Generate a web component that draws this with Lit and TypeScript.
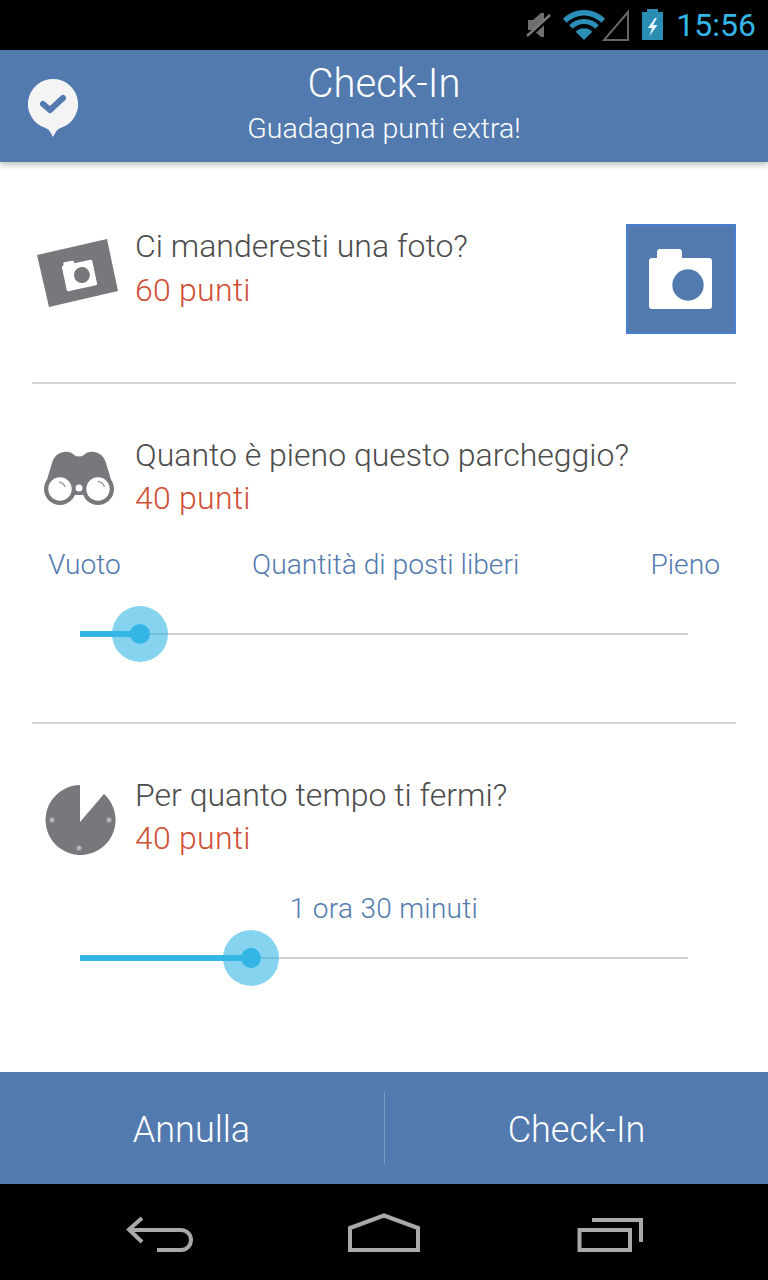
import { customElement, property } from "lit/decorators.js";
import { html, css, svg, LitElement } from "lit";

@customElement("level-slider")
export class LevelSlider extends LitElement {
  @property({ type: Number })
  value: number = 0;

  static styles = css`
    :host {
      display: block;
      height: 56px;
      margin: 0 48px;
    }
    .track {
      position: relative;
      height: 56px;
      background: linear-gradient(#d0d0d0, #d0d0d0) 0 27px / 100% 2px no-repeat;
    }
    .fill {
      position: absolute;
      left: 0;
      top: 25px;
      height: 6px;
      background: #33b5e5;
    }
    .halo {
      position: absolute;
      top: 0;
      width: 56px;
      height: 56px;
      margin-left: -28px;
      border-radius: 50%;
      background: rgba(51, 181, 229, 0.6);
    }
    .knob {
      position: absolute;
      top: 18px;
      left: 18px;
      width: 20px;
      height: 20px;
      border-radius: 50%;
      background: #33b5e5;
    }
  `;

  render() {
    return html`
      <div class="track">
        <div class="fill" style="width: ${this.value}px"></div>
        <div class="halo" style="left: ${this.value}px"><div class="knob"></div></div>
      </div>
    `;
  }
}

const cameraSmall = svg`
  <path fill="#76787c" d="M5 31 L75 15 L86 67 L17 83 Z" />
  <g transform="rotate(-12 47.500 51.500)">
    <path
      fill="#fff"
      d="M34 38.500 V37 a1.500 1.500 0 0 1 1.500 -1.500 h8 a1.500 1.500 0 0 1 1.500 1.500 v1.500 h16.500 a1.500 1.500 0 0 1 1.500 1.500 v23 a1.500 1.500 0 0 1 -1.500 1.500 h-28 a1.500 1.500 0 0 1 -1.500 -1.500 v-23 a1.500 1.500 0 0 1 1.500 -1.500 z"
    />
    <circle cx="50" cy="51.500" r="8" fill="#76787c" />
  </g>
`;

const binoculars = svg`
  <path
    fill="#76787c"
    d="M14 50 L20 30 C23 18 37 16 42 22 Q47 25 52 22 C57 16 71 18 74 30 L80 50 L66 56 L50 62 H44 L28 56 Z"
  />
  <circle cx="28" cy="56" r="16" fill="#76787c" />
  <circle cx="66" cy="56" r="16" fill="#76787c" />
  <circle cx="28" cy="56" r="11.700" fill="#fff" />
  <circle cx="66" cy="56" r="11.700" fill="#fff" />
  <path d="M27 49 a8 8 0 0 1 6 5" fill="none" stroke="#9a9b9e" stroke-width="1.300" />
  <path d="M66 48.500 a8 8 0 0 1 6.500 5.500" fill="none" stroke="#9a9b9e" stroke-width="1.300" />
  <circle cx="47" cy="55" r="3.500" fill="#fff" />
`;

const timer = svg`
  <path fill="#76787c" d="M48 12 V49 L72 21 A35 35 0 1 1 48 12 Z" />
  <circle cx="20" cy="47" r="2.500" fill="#b4b5b8" />
  <circle cx="77" cy="47" r="2.500" fill="#b4b5b8" />
  <circle cx="47" cy="75" r="2.500" fill="#b4b5b8" />
`;

@customElement("app-root")
export class AppRoot extends LitElement {
  static styles = css`
    * {
      box-sizing: border-box;
    }
    :host {
      display: block;
      width: 768px;
      height: 1280px;
      background: #fff;
      font-family: Roboto, "Liberation Sans", sans-serif;
      font-weight: 300;
      overflow: hidden;
    }
    .page {
      display: flex;
      flex-direction: column;
      height: 1280px;
    }
    .status {
      height: 50px;
      background: #000;
      display: flex;
      align-items: center;
      justify-content: flex-end;
      padding-right: 12px;
      flex: none;
    }
    .status svg {
      display: block;
    }
    .clock {
      color: #33b5e5;
      font-size: 32px;
      font-weight: 400;
      margin-left: 6px;
      line-height: 50px;
    }
    .header {
      position: relative;
      height: 112px;
      flex: none;
      background: #527aaf;
      color: #fff;
      text-align: center;
      box-shadow: 0 3px 6px rgba(0, 0, 0, 0.25);
      padding-top: 10px;
    }
    .header svg {
      position: absolute;
      left: 27px;
      top: 28px;
    }
    .title {
      font-size: 40px;
      line-height: 48px;
    }
    .subtitle {
      font-size: 28.500px;
      line-height: 40px;
      margin-top: 1px;
    }
    .content {
      flex: 1;
      padding: 0 32px;
    }
    .section {
      border-bottom: 2px solid #d4d4d4;
    }
    .section.last {
      border-bottom: none;
    }
    .first {
      height: 222px;
      display: flex;
      align-items: flex-start;
      justify-content: space-between;
      padding-top: 62px;
    }
    .row {
      display: flex;
      align-items: flex-start;
    }
    .row svg {
      flex: none;
    }
    .question {
      font-size: 32px;
      line-height: 44px;
      color: #4c4c4c;
      white-space: nowrap;
    }
    .points {
      font-size: 32px;
      line-height: 44px;
      letter-spacing: 0.250px;
      color: #cf4f36;
    }
    .second .points,
    .third .points {
      margin-top: -1px;
      margin-bottom: 1px;
    }
    .shot {
      width: 110px;
      height: 110px;
      background: #527aaf;
      border: 2px solid #4a7fd0;
      padding: 0;
    }
    .shot svg {
      display: block;
    }
    .second {
      height: 340px;
      padding-top: 49px;
    }
    .labels {
      display: flex;
      justify-content: space-between;
      padding: 0 16px;
      margin-top: 24px;
      font-size: 28.200px;
      line-height: 40px;
      color: #527aaf;
    }
    .second level-slider {
      margin-top: 21px;
    }
    .third {
      padding-top: 49px;
    }
    .duration {
      text-align: center;
      font-size: 28px;
      line-height: 40px;
      letter-spacing: 0.300px;
      color: #527aaf;
      margin-top: 28px;
      margin-bottom: 1px;
    }
    .actions {
      height: 112px;
      flex: none;
      background: #527aaf;
      color: #fff;
      display: flex;
      align-items: center;
    }
    .actions button {
      flex: 1;
      height: 72px;
      border: none;
      background: none;
      color: #fff;
      font: inherit;
      font-size: 36px;
      padding: 4px 0 0;
    }
    .actions button:first-child {
      border-right: 1px solid #7c9ac1;
      padding-right: 1px;
    }
    .nav {
      height: 96px;
      flex: none;
      background: #000;
    }
    .nav svg {
      display: block;
    }
  `;

  render() {
    return html`
      <div class="page">
        <div class="status">
          <svg width="150" height="50" viewBox="0 0 150 50">
            <path d="M8 20 h5 l8 -7 h3 v24 h-3 l-8 -7 h-5 z" fill="#6f6f6f" />
            <path d="M8 38 L31 17" stroke="#000" stroke-width="3" />
            <path d="M7 36 L30 15" stroke="#7a7a7a" stroke-width="2.500" />
            <g fill="#2b8fb8">
              <path d="M42.800 18.800 A30 30 0 0 1 85.200 18.800 L81.300 22.700 A24.500 24.500 0 0 0 46.700 22.700 Z" />
              <path d="M49.150 25.150 A21 21 0 0 1 78.850 25.150 L75.300 28.700 A16 16 0 0 0 52.700 28.700 Z" />
              <path d="M55.700 31.700 A11.700 11.700 0 0 1 72.300 31.700 L64 40 Z" />
            </g>
            <path d="M84 40 H108 V12 Z" fill="none" stroke="#666" stroke-width="2" />
            <path d="M127 12 V9 h11 v3 h5 v28 h-21 v-28 z" fill="#2b8cb4" />
            <path d="M135 18 L128 28 H132 L129.500 36 L137.500 25 H133 L137 18 Z" fill="#e8f4f8" />
          </svg>
          <span class="clock">15:56</span>
        </div>
        <div class="header">
          <svg width="52" height="62" viewBox="0 0 52 62">
            <path
              fill="#f4f4f4"
              d="M26 1 A25 25 0 0 1 34 49.700 Q30 51 28.800 54 L26 59 L23.200 54 Q22 51 18 49.700 A25 25 0 0 1 26 1 Z"
            />
            <path
              d="M16 26 L23 32 L36 20"
              fill="none"
              stroke="#527aaf"
              stroke-width="6"
              stroke-linecap="round"
              stroke-linejoin="round"
            />
          </svg>
          <div class="title">Check-In</div>
          <div class="subtitle">Guadagna punti extra!</div>
        </div>
        <div class="content">
          <div class="section first">
            <div class="row">
              <svg width="103" height="88" viewBox="0 0 103 88">${cameraSmall}</svg>
              <div>
                <div class="question">Ci manderesti una foto?</div>
                <div class="points">60 punti</div>
              </div>
            </div>
            <button class="shot">
              <svg width="106" height="106" viewBox="2 2 106 106">
                <path
                  fill="#fff"
                  d="M31 34 V28 a3 3 0 0 1 3 -3 h19 a3 3 0 0 1 3 3 V34 h27 a3 3 0 0 1 3 3 V82 a3 3 0 0 1 -3 3 H26 a3 3 0 0 1 -3 -3 V37 a3 3 0 0 1 3 -3 Z"
                />
                <circle cx="62" cy="61" r="15.700" fill="#527aaf" />
              </svg>
            </button>
          </div>
          <div class="section second">
            <div class="row">
              <svg width="103" height="88" viewBox="0 0 103 88">${binoculars}</svg>
              <div>
                <div class="question">Quanto è pieno questo parcheggio?</div>
                <div class="points">40 punti</div>
              </div>
            </div>
            <div class="labels">
              <span>Vuoto</span>
              <span>Quantità di posti liberi</span>
              <span>Pieno</span>
            </div>
            <level-slider .value=${60}></level-slider>
          </div>
          <div class="section third last">
            <div class="row">
              <svg width="103" height="88" viewBox="0 0 103 88">${timer}</svg>
              <div>
                <div class="question">Per quanto tempo ti fermi?</div>
                <div class="points">40 punti</div>
              </div>
            </div>
            <div class="duration">1 ora 30 minuti</div>
            <level-slider .value=${171}></level-slider>
          </div>
        </div>
        <div class="actions">
          <button>Annulla</button>
          <button>Check-In</button>
        </div>
        <div class="nav">
          <svg width="768" height="96" viewBox="0 0 768 96">
            <g fill="none" stroke="#a9a9a9" stroke-width="4">
              <path d="M142 34 L129 45.500 L142 58" />
              <path d="M129 46 H181 a10 10 0 0 1 0 20 H157" />
              <path d="M350 66 V44 L384 31.500 L418 44 V66 Z" />
              <path d="M579.500 46 H630 V66 H579.500 Z" />
              <path d="M592 36 H641 V58" />
            </g>
          </svg>
        </div>
      </div>
    `;
  }
}

declare global {
  interface HTMLElementTagNameMap {
    "app-root": AppRoot;
    "level-slider": LevelSlider;
  }
}
